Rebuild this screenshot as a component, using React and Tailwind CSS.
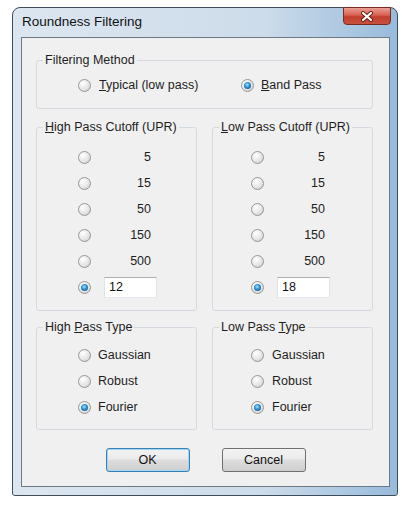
import React, { useState } from "react";

const font = { fontFamily: '"Liberation Sans", Arial, sans-serif' };

function Radio({ checked }) {
    return (
        <span className="w-[13px] h-[13px] shrink-0 rounded-full border border-[#979797] bg-[radial-gradient(circle_at_35%_30%,#ffffff_0%,#e6e6e6_55%,#c4c4c4_100%)] flex items-center justify-center">
            {checked && (
                <span className="w-[7px] h-[7px] rounded-full bg-[radial-gradient(circle_at_45%_40%,#a6e4ff_0%,#2b8dcf_45%,#114670_100%)]" />
            )}
        </span>
    );
}

function Group({ title, className, children }) {
    return (
        <fieldset className={"border border-[#d3d9de] rounded-[3px] min-w-0 " + className}>
            <legend className="ml-[6px] px-[2px] leading-[15px] text-[12.5px] text-[#1e1e1e]">{title}</legend>
            {children}
        </fieldset>
    );
}

function CutoffGroup({ title, value, padLeft, numWidth, selected, onSelect }) {
    const opts = ["5", "15", "50", "150", "500"];
    return (
        <Group title={title} className="w-[161px] pt-[9px] pb-[10px]">
            <div className={"flex flex-col " + padLeft}>
                {opts.map((o) => (
                    <div key={o} className="h-[26px] flex items-center" onClick={() => onSelect(o)}>
                        <Radio checked={selected === o} />
                        <span className={"text-right text-[12.5px] text-[#1e1e1e] " + numWidth}>{o}</span>
                    </div>
                ))}
                <div className="h-[26px] flex items-center" onClick={() => onSelect("custom")}>
                    <Radio checked={selected === "custom"} />
                    <input
                        type="text"
                        defaultValue={value}
                        className="ml-[13px] w-[53px] h-[21px] px-[4px] text-[12.5px] text-[#111] bg-white border border-[#e2e3ea] border-t-[#abadb3] border-b-[#e3e9ef] outline-none"
                        style={font}
                    />
                </div>
            </div>
        </Group>
    );
}

function TypeGroup({ title, padLeft, gap, selected, onSelect }) {
    return (
        <Group title={title} className="w-[161px] pt-[7px] pb-[9px]">
            <div className={"flex flex-col " + padLeft}>
                {["Gaussian", "Robust", "Fourier"].map((t) => (
                    <div key={t} className={"h-[26px] flex items-center " + gap} onClick={() => onSelect(t)}>
                        <Radio checked={selected === t} />
                        <span className="text-[12.5px] text-[#1e1e1e]">{t}</span>
                    </div>
                ))}
            </div>
        </Group>
    );
}

export default function App() {
    const [method, setMethod] = useState("band");
    const [highCut, setHighCut] = useState("custom");
    const [lowCut, setLowCut] = useState("custom");
    const [highType, setHighType] = useState("Fourier");
    const [lowType, setLowType] = useState("Fourier");

    return (
        <div className="w-[412px] h-[507px] bg-white pt-[7px] pl-[12px]" style={font}>
            <div className="w-[386px] h-[489px] flex flex-col rounded-t-[8px] rounded-b-[3px] border border-[#3e4d5c] bg-[linear-gradient(90deg,#dce6f0_0%,#cddcea_65%,#98bbdb_100%)]">
                {/* title bar */}
                <div className="h-[29px] flex justify-between">
                    <span className="self-center pl-[9px] text-[13.5px] text-[#111]">Roundness Filtering</span>
                    <button className="-mt-px mr-[6px] w-[48px] h-[18px] rounded-b-[4px] border border-[#7a2a22] bg-[linear-gradient(#eaa195_0%,#d9604f_45%,#c13d2d_55%,#c8523f_100%)] flex items-center justify-center">
                        <svg width="14" height="11" viewBox="0 0 14 11">
                            <path d="M3 2 L11 9 M11 2 L3 9" stroke="#5e2019" strokeWidth="4" strokeLinecap="round" />
                            <path d="M3 2 L11 9 M11 2 L3 9" stroke="#ffffff" strokeWidth="2.2" strokeLinecap="round" />
                        </svg>
                    </button>
                </div>

                {/* client area */}
                <div className="ml-[8px] mr-[7px] h-[450px] border border-[#6d7a86] bg-[#f0f0f0] flex flex-col">
                    <div className="ml-[14px] w-[337px] flex flex-col">
                        <Group title="Filtering Method" className="mt-[15px] pt-[7px] pb-[13px]">
                            <div className="flex pl-[41px] h-[20px] items-center">
                                <div className="w-[163px] flex items-center gap-[8px]" onClick={() => setMethod("typical")}>
                                    <Radio checked={method === "typical"} />
                                    <span className="text-[12.5px] text-[#1e1e1e]"><u>T</u>ypical (low pass)</span>
                                </div>
                                <div className="flex items-center gap-[7px]" onClick={() => setMethod("band")}>
                                    <Radio checked={method === "band"} />
                                    <span className="text-[12.5px] text-[#1e1e1e]"><u>B</u>and Pass</span>
                                </div>
                            </div>
                        </Group>

                        <div className="mt-[11px] flex gap-[15px]">
                            <CutoffGroup
                                title={<><u>H</u>igh Pass Cutoff (UPR)</>}
                                value="12"
                                padLeft="pl-[41px]"
                                numWidth="w-[60px]"
                                selected={highCut}
                                onSelect={setHighCut}
                            />
                            <CutoffGroup
                                title={<><u>L</u>ow Pass Cutoff (UPR)</>}
                                value="18"
                                padLeft="pl-[38px]"
                                numWidth="w-[61px]"
                                selected={lowCut}
                                onSelect={setLowCut}
                            />
                        </div>

                        <div className="mt-[9px] flex gap-[15px]">
                            <TypeGroup
                                title={<>High <u>P</u>ass Type</>}
                                padLeft="pl-[41px]"
                                gap="gap-[7px]"
                                selected={highType}
                                onSelect={setHighType}
                            />
                            <TypeGroup
                                title={<>Low Pass <u>T</u>ype</>}
                                padLeft="pl-[38px]"
                                gap="gap-[8px]"
                                selected={lowType}
                                onSelect={setLowType}
                            />
                        </div>
                    </div>

                    <div className="mt-[18px] flex justify-center gap-[32px]">
                        <button className="w-[84px] h-[24px] rounded-[3px] border border-[#3c7fb1] shadow-[inset_0_0_0_1px_#9fd8f5] bg-[linear-gradient(#f2f2f2_0%,#ebebeb_45%,#dddddd_50%,#cfcfcf_100%)] text-[12.5px] text-[#111]">
                            OK
                        </button>
                        <button className="w-[84px] h-[24px] rounded-[3px] border border-[#707070] bg-[linear-gradient(#f2f2f2_0%,#ebebeb_45%,#dddddd_50%,#cfcfcf_100%)] text-[12.5px] text-[#111]">
                            Cancel
                        </button>
                    </div>
                </div>
            </div>
        </div>
    );
}
